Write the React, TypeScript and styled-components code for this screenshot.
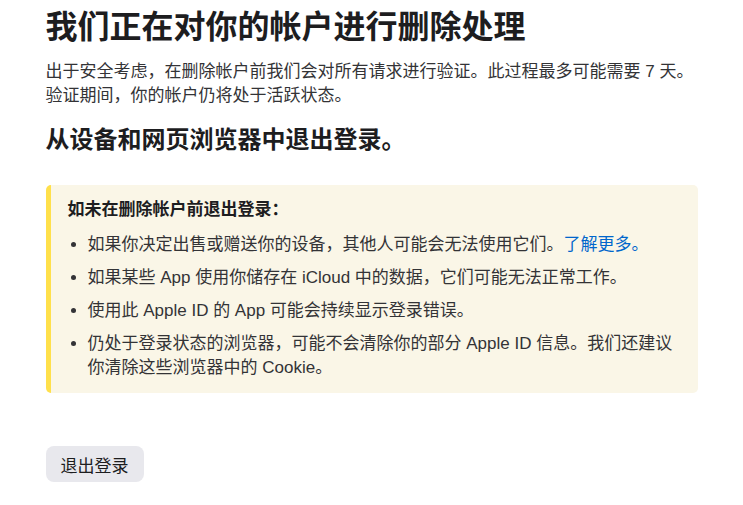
import React from 'react';
import styled, { createGlobalStyle } from 'styled-components';

const GlobalStyle = createGlobalStyle`
  html, body {
    margin: 0;
    padding: 0;
    background: #ffffff;
  }
  body {
    font-family: "Liberation Sans", "Noto Sans CJK SC", sans-serif;
    color: #1d1d1f;
    -webkit-font-smoothing: antialiased;
  }
`;

const notices: React.ReactNode[] = [
  <>
    如果你决定出售或赠送你的设备，其他人可能会无法使用它们。<Link href="#more">了解更多。</Link>
  </>,
  '如果某些 App 使用你储存在 iCloud 中的数据，它们可能无法正常工作。',
  '使用此 Apple ID 的 App 可能会持续显示登录错误。',
  '仍处于登录状态的浏览器，可能不会清除你的部分 Apple ID 信息。我们还建议你清除这些浏览器中的 Cookie。',
];

const Page = styled.main`
  width: 652px;
  margin: 0 auto;
  padding-top: 9px;
`;

const Title = styled.h1`
  margin: 0;
  font-size: 32px;
  line-height: 36px;
  font-weight: 700;
  letter-spacing: 0;
`;

const Intro = styled.p`
  margin: 15px 0 0;
  font-size: 17px;
  line-height: 24px;
  color: #333336;
`;

const SubTitle = styled.h2`
  margin: 18px 0 0;
  font-size: 24px;
  line-height: 28px;
  font-weight: 700;
`;

const Callout = styled.section`
  margin-top: 31px;
  background: #faf6e7;
  border-left: 5px solid #ffe04b;
  border-radius: 5px;
  padding: 13px 19px 13px 17px;
`;

const CalloutTitle = styled.p`
  margin: 0;
  font-size: 17px;
  line-height: 24px;
  font-weight: 700;
  color: #1d1d1f;
`;

const List = styled.ul`
  margin: 11px 0 0;
  padding-left: 20px;
  list-style: disc;
`;

const Item = styled.li`
  font-size: 17px;
  line-height: 24px;
  color: #333336;
  & + & {
    margin-top: 9px;
  }
`;

function Link(props: { href: string; children: React.ReactNode }) {
  return <LinkText href={props.href}>{props.children}</LinkText>;
}

const LinkText = styled.a`
  color: #0066cc;
  text-decoration: none;
`;

const Actions = styled.div`
  margin-top: 53px;
`;

const Button = styled.button`
  height: 36px;
  padding: 0 15px;
  border: none;
  border-radius: 8px;
  background: #e8e8ed;
  color: #1d1d1f;
  font-family: inherit;
  font-size: 17px;
  cursor: pointer;
`;

const App = () => {
  return (
    <>
      <GlobalStyle />
      <Page>
        <Title>我们正在对你的帐户进行删除处理</Title>
        <Intro>
          出于安全考虑，在删除帐户前我们会对所有请求进行验证。此过程最多可能需要 7 天。
          <br />
          验证期间，你的帐户仍将处于活跃状态。
        </Intro>
        <SubTitle>从设备和网页浏览器中退出登录。</SubTitle>
        <Callout>
          <CalloutTitle>如未在删除帐户前退出登录：</CalloutTitle>
          <List>
            {notices.map((text, index) => (
              <Item key={`notice-${index}`}>{text}</Item>
            ))}
          </List>
        </Callout>
        <Actions>
          <Button type="button">退出登录</Button>
        </Actions>
      </Page>
    </>
  );
};

export default App;
